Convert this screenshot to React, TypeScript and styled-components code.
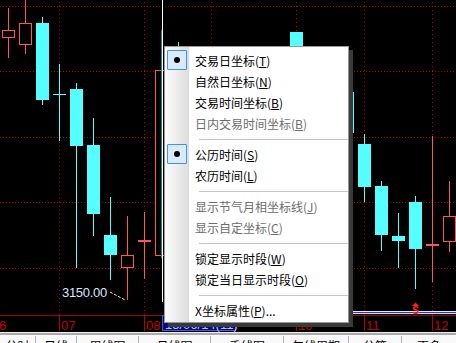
import React from 'react';
import styled, { createGlobalStyle } from 'styled-components';

const GlobalStyle = createGlobalStyle`
  html, body { margin: 0; padding: 0; background: #000; overflow: hidden; }
  body { width: 456px; height: 343px; font-family: "Liberation Sans", Arial, sans-serif; }
`;

const Screen = styled.div`
  width: 456px;
  height: 343px;
  display: flex;
  flex-direction: column;
  overflow: hidden;
`;

const ChartArea = styled.div`
  position: relative;
  flex: none;
  height: 332px;
  background: #000;
`;

const ChartSvg = styled.svg`
  display: block;
`;

const Menu = styled.div`
  position: absolute;
  left: 164px;
  top: 46px;
  width: 185px;
  box-sizing: border-box;
  border: 1px solid #979797;
  box-shadow: 4px 4px 0 #3a3a3a;
  padding: 3px 0 1px;
  background: linear-gradient(90deg, #fbfbfb 0px, #efefef 10px, #dedede 23px, #d6d6d6 24px, #ffffff 24px, #ffffff 100%);
  font-family: "Noto Sans CJK SC", "Microsoft YaHei", sans-serif;
  font-size: 12px;
`;

const Item = styled.div<{ $disabled?: boolean }>`
  display: flex;
  align-items: center;
  height: 21px;
  color: ${(p) => (p.$disabled ? '#6d6d6d' : '#000')};
`;

const MarkCell = styled.div`
  flex: none;
  width: 24px;
  height: 21px;
  display: flex;
  align-items: center;
  padding-left: 2px;
  box-sizing: border-box;
`;

const CheckBox = styled.div`
  width: 20px;
  height: 20px;
  box-sizing: border-box;
  border: 1px solid #3d93e8;
  background: #d9eafc;
  border-radius: 1px;
  display: flex;
  align-items: center;
  justify-content: center;
  margin-top: -1px;
`;

const Dot = styled.div`
  width: 6px;
  height: 6px;
  border-radius: 50%;
  background: #000;
`;

const Label = styled.span`
  padding-left: 6px;
  line-height: 21px;
  white-space: nowrap;
`;

const Key = styled.span`
  text-decoration: underline;
  text-underline-offset: 1px;
`;

const Separator = styled.div`
  height: 10px;
  display: flex;
  align-items: center;
  padding-left: 34px;
  &::after {
    content: '';
    flex: 1;
    height: 1px;
    background: #c6c6c6;
  }
`;

const BottomBar = styled.div`
  flex: none;
  height: 11px;
  display: flex;
  background: linear-gradient(180deg, #eeeeee 0px, #eeeeee 1px, #aaaaaa 1px, #aaaaaa 3px, #f9f9f9 3px);
  font-family: "Noto Sans CJK SC", sans-serif;
  font-size: 12px;
  color: #000;
`;

const Tab = styled.div<{ $w: number }>`
  flex: none;
  width: ${(p) => p.$w}px;
  box-sizing: border-box;
  border-right: 1px solid #b0b0b0;
  margin-top: 4px;
  padding-top: 4px;
  line-height: 12px;
  text-align: center;
  white-space: nowrap;
  overflow: hidden;
  &:last-child { border-right: none; }
`;

type MenuEntry =
  | { sep: true }
  | { text: string; key: string; tail?: string; checked?: boolean; disabled?: boolean };

const menuEntries: MenuEntry[] = [
  { text: '交易日坐标', key: 'T', checked: true },
  { text: '自然日坐标', key: 'N' },
  { text: '交易时间坐标', key: 'B' },
  { text: '日内交易时间坐标', key: 'B', disabled: true },
  { sep: true },
  { text: '公历时间', key: 'S', checked: true },
  { text: '农历时间', key: 'L' },
  { sep: true },
  { text: '显示节气月相坐标线', key: 'J', disabled: true },
  { text: '显示自定坐标', key: 'C', disabled: true },
  { sep: true },
  { text: '锁定显示时段', key: 'W' },
  { text: '锁定当日显示时段', key: 'O' },
  { sep: true },
  { text: 'X坐标属性', key: 'P', tail: '...' },
];

const CYAN = '#55ffff';
const RED = '#ff5555';
const GRID = '#c00000';

type Candle = {
  x: number;
  top: number;
  bottom: number;
  wt: number;
  wb: number;
  kind: 'up' | 'down' | 'dojiC' | 'dojiR';
};

const candles: Candle[] = [
  { x: 2, top: 30, bottom: 38, wt: 8, wb: 58, kind: 'up' },
  { x: 19, top: 23, bottom: 45, wt: 0, wb: 54, kind: 'up' },
  { x: 36, top: 23, bottom: 100, wt: 17, wb: 105, kind: 'down' },
  { x: 53, top: 94, bottom: 95, wt: 64, wb: 141, kind: 'dojiC' },
  { x: 70, top: 89, bottom: 146, wt: 83, wb: 268, kind: 'down' },
  { x: 87, top: 145, bottom: 214, wt: 118, wb: 236, kind: 'down' },
  { x: 104, top: 235, bottom: 255, wt: 197, wb: 280, kind: 'down' },
  { x: 121, top: 255, bottom: 268, wt: 216, wb: 300, kind: 'up' },
  { x: 138, top: 240, bottom: 242, wt: 212, wb: 279, kind: 'dojiR' },
  { x: 155, top: 70, bottom: 256, wt: 70, wb: 256, kind: 'up' },
  { x: 172, top: 50, bottom: 120, wt: 42, wb: 130, kind: 'down' },
  { x: 290, top: 32, bottom: 90, wt: 32, wb: 100, kind: 'down' },
  { x: 341, top: 92, bottom: 133, wt: 92, wb: 133, kind: 'down' },
  { x: 358, top: 144, bottom: 187, wt: 134, wb: 202, kind: 'down' },
  { x: 375, top: 186, bottom: 235, wt: 181, wb: 251, kind: 'down' },
  { x: 392, top: 236, bottom: 241, wt: 213, wb: 268, kind: 'down' },
  { x: 409, top: 202, bottom: 249, wt: 196, wb: 289, kind: 'down' },
  { x: 426, top: 244, bottom: 246, wt: 136, wb: 282, kind: 'dojiR' },
  { x: 443, top: 216, bottom: 242, wt: 181, wb: 252, kind: 'up' },
];

const hGrid = [6, 71, 137, 202, 268];
const vGrid = [59, 144, 211, 296, 364, 432];
const dayLabels = [
  { x: -1, t: '6' },
  { x: 61, t: '07' },
  { x: 146, t: '08' },
  { x: 298, t: '10' },
  { x: 366, t: '11' },
  { x: 434, t: '12' },
];

const tabs = [
  { w: 36, t: '分时' },
  { w: 41, t: '日线' },
  { w: 62, t: '周线图' },
  { w: 72, t: '月线图' },
  { w: 73, t: '季线图' },
  { w: 65, t: '年线周期' },
  { w: 53, t: '分笔' },
  { w: 54, t: '更多' },
];

function CandleShape({ c }: { c: Candle }) {
  const cx = c.x + 6.5;
  if (c.kind === 'down') {
    return (
      <g>
        <line x1={cx} y1={c.wt} x2={cx} y2={c.wb} stroke={CYAN} />
        <rect x={c.x} y={c.top} width={13} height={c.bottom - c.top} fill={CYAN} />
      </g>
    );
  }
  if (c.kind === 'up') {
    return (
      <g>
        <line x1={cx} y1={c.wt} x2={cx} y2={c.wb} stroke={RED} />
        <rect x={c.x + 0.5} y={c.top + 0.5} width={12} height={c.bottom - c.top - 1} fill="#000" stroke={RED} />
      </g>
    );
  }
  const col = c.kind === 'dojiC' ? CYAN : RED;
  return (
    <g>
      <line x1={cx} y1={c.wt} x2={cx} y2={c.wb} stroke={col} />
      <rect x={c.x} y={c.top} width={13} height={c.bottom - c.top} fill={col} />
    </g>
  );
}

function Chart() {
  return (
    <ChartSvg width={456} height={332} viewBox="0 0 456 332" shapeRendering="crispEdges">
      {hGrid.map((y) => (
        <line key={'h' + y} x1={0} y1={y + 0.5} x2={456} y2={y + 0.5} stroke={GRID} strokeDasharray="1 2" />
      ))}
      {vGrid.map((x) => (
        <line key={'v' + x} x1={x + 0.5} y1={2} x2={x + 0.5} y2={315} stroke={GRID} strokeDasharray="1 3" />
      ))}
      {candles.map((c, i) => (
        <CandleShape key={i} c={c} />
      ))}
      <line x1={161.5} y1={30} x2={161.5} y2={258} stroke="#138a8a" />
      <line x1={162.5} y1={0} x2={162.5} y2={302} stroke="#ffffff" />

      <text x={62} y={297} fontFamily="Liberation Sans, Arial, sans-serif" fontSize={13} fill="#dbe7ff" letterSpacing="-0.3" shapeRendering="auto">
        3150.00
      </text>
      <line x1={110} y1={292} x2={126} y2={300.5} stroke="#e8e8e8" strokeDasharray="3 1.5" shapeRendering="auto" />

      <line x1={164} y1={311.5} x2={456} y2={311.5} stroke="#e4eaff" />
      <line x1={164} y1={312.5} x2={456} y2={312.5} stroke="#23409c" />
      <line x1={164} y1={313.5} x2={456} y2={313.5} stroke="#c9d6ff" />

      <polygon points="412,306 415.5,302.5 419,306" fill="#ff2020" shapeRendering="auto" />
      <text x={415.5} y={313.5} textAnchor="middle" fontFamily="Liberation Sans, Arial, sans-serif" fontSize={10} fontWeight="bold" fill="#ff2020" shapeRendering="auto">
        S
      </text>

      <line x1={0} y1={315.5} x2={456} y2={315.5} stroke="#a80000" />
      {vGrid.map((x) => (
        <line key={'t' + x} x1={x + 0.5} y1={315} x2={x + 0.5} y2={331} stroke="#b00000" />
      ))}
      {dayLabels.map((d) => (
        <text key={d.t} x={d.x} y={330} fontFamily="Liberation Sans, Arial, sans-serif" fontSize={13} fill="#c40000" shapeRendering="auto">
          {d.t}
        </text>
      ))}
      <rect x={162.5} y={315.5} width={73} height={15} fill="#000c86" stroke="#4a56d6" />
      <text x={165} y={329} fontFamily="Liberation Sans, Arial, sans-serif" fontSize={13} fill="#b0c6ff" shapeRendering="auto">
        15/06/14(11)
      </text>
    </ChartSvg>
  );
}

function ContextMenu() {
  return (
    <Menu>
      {menuEntries.map((e, i) =>
        'sep' in e ? (
          <Separator key={i} />
        ) : (
          <Item key={i} $disabled={e.disabled}>
            <MarkCell>
              {e.checked && (
                <CheckBox>
                  <Dot />
                </CheckBox>
              )}
            </MarkCell>
            <Label>
              {e.text}(<Key>{e.key}</Key>){e.tail ?? ''}
            </Label>
          </Item>
        )
      )}
    </Menu>
  );
}

export default function App() {
  return (
    <>
      <GlobalStyle />
      <Screen>
        <ChartArea>
          <Chart />
          <ContextMenu />
        </ChartArea>
        <BottomBar>
          {tabs.map((t) => (
            <Tab key={t.t} $w={t.w}>
              {t.t}
            </Tab>
          ))}
        </BottomBar>
      </Screen>
    </>
  );
}
